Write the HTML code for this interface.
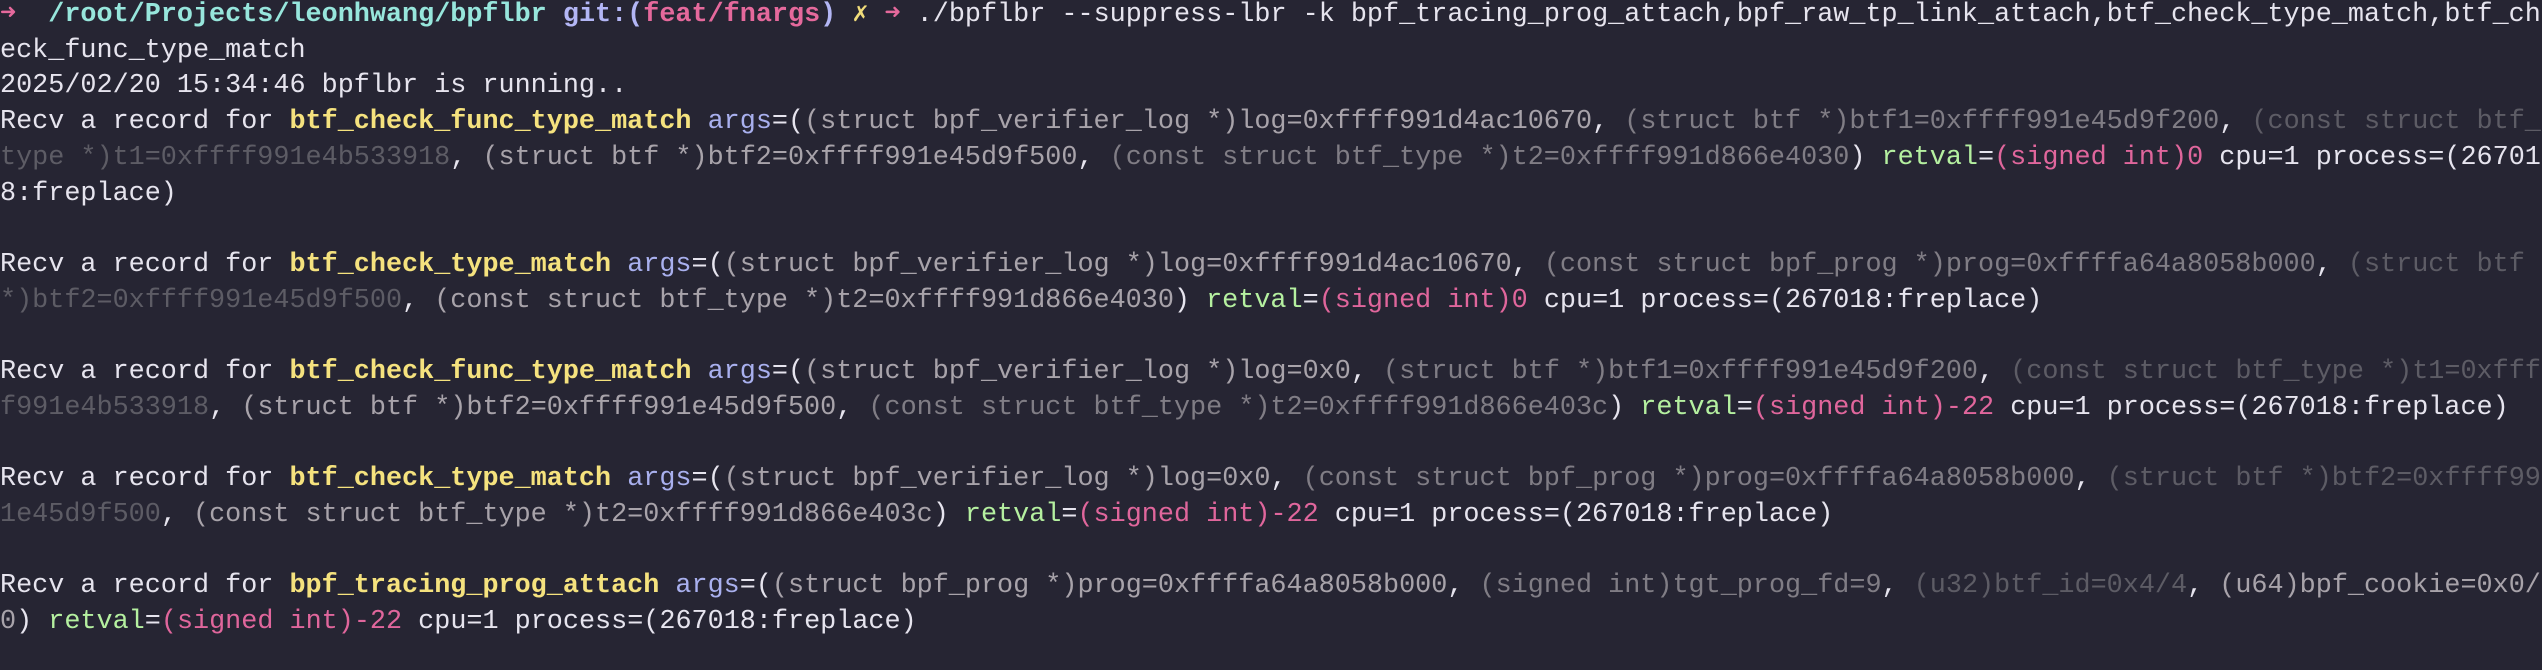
<!DOCTYPE html>
<html><head><meta charset="utf-8"><style>
html,body{margin:0;padding:0;background:#262533;width:2542px;height:670px;overflow:hidden}
pre{margin:0;padding:0 0 0 0;position:relative;top:-2px;font-family:"Liberation Mono","DejaVu Sans Mono",monospace;font-size:26.8px;line-height:35.7px;color:#e6e4ee;white-space:pre}
.p{color:#e5699c}.c{color:#97e6dc;font-weight:bold}.b{color:#b3b6f5;font-weight:bold}.y{color:#f0dc7a}.fn{color:#f5e27e;font-weight:bold}
.a{color:#a9b0ee}.g1{color:#a8a3aa}.g2{color:#807d85}.g3{color:#5d5c65}.r{color:#b5f0a0}.s{color:#e0669c}
.w{display:inline-block;width:16.08px;overflow:hidden;text-align:center;vertical-align:top}
</style></head><body><pre><span class="p w">➜</span>  <span class="c">/root/Projects/leonhwang/bpflbr</span> <span class="b">git:(</span><span class="p" style="font-weight:bold">feat/fnargs</span><span class="b">)</span> <span class="y w">✗</span> <span class="p w">➜</span> ./bpflbr --suppress-lbr -k bpf_tracing_prog_attach,bpf_raw_tp_link_attach,btf_check_type_match,btf_ch
eck_func_type_match
2025/02/20 15:34:46 bpflbr is running..
Recv a record for <span class="fn">btf_check_func_type_match</span> <span class="a">args</span>=(<span class="g1">(struct bpf_verifier_log *)log=0xffff991d4ac10670</span>, <span class="g2">(struct btf *)btf1=0xffff991e45d9f200</span>, <span class="g3">(const struct btf_</span>
<span class="g3">type *)t1=0xffff991e4b533918</span>, <span class="g1">(struct btf *)btf2=0xffff991e45d9f500</span>, <span class="g2">(const struct btf_type *)t2=0xffff991d866e4030</span>) <span class="r">retval</span>=<span class="s">(signed int)0</span> cpu=1 process=(26701
8:freplace)

Recv a record for <span class="fn">btf_check_type_match</span> <span class="a">args</span>=(<span class="g1">(struct bpf_verifier_log *)log=0xffff991d4ac10670</span>, <span class="g2">(const struct bpf_prog *)prog=0xffffa64a8058b000</span>, <span class="g3">(struct btf</span>
<span class="g3">*)btf2=0xffff991e45d9f500</span>, <span class="g1">(const struct btf_type *)t2=0xffff991d866e4030</span>) <span class="r">retval</span>=<span class="s">(signed int)0</span> cpu=1 process=(267018:freplace)

Recv a record for <span class="fn">btf_check_func_type_match</span> <span class="a">args</span>=(<span class="g1">(struct bpf_verifier_log *)log=0x0</span>, <span class="g2">(struct btf *)btf1=0xffff991e45d9f200</span>, <span class="g3">(const struct btf_type *)t1=0xfff</span>
<span class="g3">f991e4b533918</span>, <span class="g1">(struct btf *)btf2=0xffff991e45d9f500</span>, <span class="g2">(const struct btf_type *)t2=0xffff991d866e403c</span>) <span class="r">retval</span>=<span class="s">(signed int)-22</span> cpu=1 process=(267018:freplace)

Recv a record for <span class="fn">btf_check_type_match</span> <span class="a">args</span>=(<span class="g1">(struct bpf_verifier_log *)log=0x0</span>, <span class="g2">(const struct bpf_prog *)prog=0xffffa64a8058b000</span>, <span class="g3">(struct btf *)btf2=0xffff99</span>
<span class="g3">1e45d9f500</span>, <span class="g1">(const struct btf_type *)t2=0xffff991d866e403c</span>) <span class="r">retval</span>=<span class="s">(signed int)-22</span> cpu=1 process=(267018:freplace)

Recv a record for <span class="fn">bpf_tracing_prog_attach</span> <span class="a">args</span>=(<span class="g1">(struct bpf_prog *)prog=0xffffa64a8058b000</span>, <span class="g2">(signed int)tgt_prog_fd=9</span>, <span class="g3">(u32)btf_id=0x4/4</span>, <span class="g1">(u64)bpf_cookie=0x0/</span>
<span class="g1">0</span>) <span class="r">retval</span>=<span class="s">(signed int)-22</span> cpu=1 process=(267018:freplace)
</pre></body></html>
